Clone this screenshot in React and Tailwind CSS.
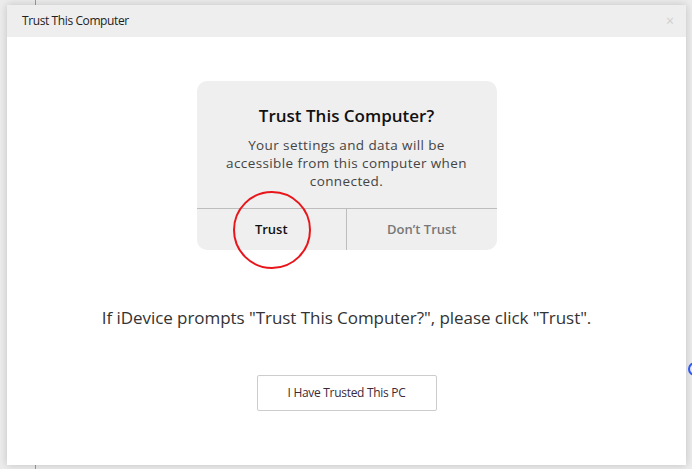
import React from 'react';

const font = { fontFamily: '"Open Sans", "Noto Sans", sans-serif' };

const TrustCard = () => (
  <div className="w-[300px] h-[169px] rounded-[10px] bg-[#efefef] flex flex-col relative">
    <div className="flex-1 flex flex-col items-center pt-[23px]">
      <h2 className="text-[17px] leading-[24px] font-semibold text-[#111]">Trust This Computer?</h2>
      <p className="mt-[8px] text-[13.5px] leading-[18px] tracking-[0.4px] text-[#444] text-center px-[22px]">
        Your settings and data will be accessible from this computer when connected.
      </p>
    </div>
    <div className="h-[42px] border-t border-[#bdbdbd] flex">
      <div className="flex-1 flex items-center justify-center text-[13px] font-semibold text-[#111] border-r border-[#bdbdbd]">
        Trust
      </div>
      <div className="flex-1 flex items-center justify-center text-[13px] font-semibold text-[#777]">
        Don’t Trust
      </div>
    </div>
    {/* red highlight ring */}
    <div className="absolute left-[36px] top-[110px] w-[78px] h-[78px] rounded-full border-2 border-[#e8161b]" />
  </div>
);

export default function App() {
  return (
    <div className="w-[692px] h-[469px] bg-[#ececec] relative overflow-hidden" style={font}>
      <div className="absolute left-[35px] top-0 w-px h-full bg-[#9a9a9a]" />
      <div className="absolute left-[688px] top-[362px] w-[14px] h-[14px] rounded-full border-2 border-[#2f5bff]" />
      <div className="absolute left-[7px] top-[5px] w-[679px] h-[460px] bg-white flex flex-col shadow-[0_0_8px_rgba(0,0,0,0.18)]">
        <div className="h-[32px] bg-[#eeeeee] flex items-center justify-between pl-[15px] pr-[12px]">
          <span className="text-[12px] text-[#222] tracking-[-0.4px]">Trust This Computer</span>
          <span className="text-[14px] text-[#cfcfcf] leading-none">×</span>
        </div>
        <div className="flex-1 flex flex-col items-center pt-[44px]">
          <TrustCard />
          <p className="mt-[55px] text-[17px] text-[#333] tracking-[-0.05px]">
            If iDevice prompts "Trust This Computer?", please click "Trust".
          </p>
          <button className="mt-[44px] w-[180px] h-[36px] border border-[#cccccc] rounded-[2px] bg-white text-[12px] text-[#3b2a3a] tracking-[-0.3px]">
            I Have Trusted This PC
          </button>
        </div>
      </div>
    </div>
  );
}
